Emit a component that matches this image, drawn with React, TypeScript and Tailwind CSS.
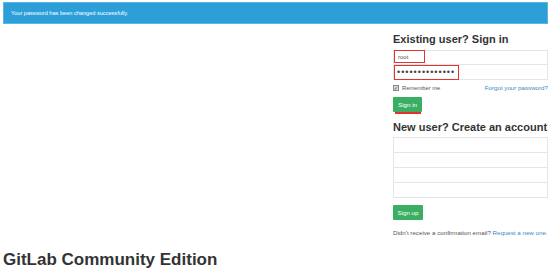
import React from "react";

const font = { fontFamily: '"Liberation Sans", Arial, sans-serif' };

function Field({ children }: { children?: React.ReactNode }) {
  return (
    <div className="-mt-px flex h-[16px] items-center border border-[#e5e5e5] bg-white px-[4px] first:mt-0">
      {children}
    </div>
  );
}

function Annotation({ className }: { className: string }) {
  // red markup boxes drawn over the form
  return <div className={`pointer-events-none absolute border-[1.5px] border-[#e0342c] ${className}`} />;
}

export default function App() {
  return (
    <div style={font} className="w-[553px] h-[268px] overflow-hidden bg-white text-[#555]">
      <div className="ml-[3px] mt-[2px] w-[545px]">
        <div className="flex h-[22px] items-center border border-[#58b6e4] bg-[#2c9fd9] pl-[7px] text-[5.6px] text-white">
          Your password has been changed successfully.
        </div>

        <div className="flex justify-end">
          <div className="relative w-[155px]">
            <h2 className="mt-[9px] text-[11px] font-bold leading-[13px] text-[#333]">Existing user? Sign in</h2>

            <div className="mt-[4px] flex flex-col">
              <div className="flex h-[15px] items-center border border-[#e5e5e5] px-[4px] text-[6px] text-[#555]">
                root
              </div>
              <div className="-mt-px flex h-[16px] items-center border border-[#e5e5e5] px-[3px]">
                <span className="text-[9px] leading-none tracking-[1px] text-[#444]">••••••••••••••</span>
              </div>
            </div>

            <div className="mt-[3px] flex h-[10px] items-center justify-between">
              <label className="flex items-center gap-[3px] text-[5.8px] text-[#555]">
                <span className="flex h-[6px] w-[6px] items-center justify-center border border-[#888] bg-[#ddd] text-[5px] leading-none text-[#333]">
                  ✓
                </span>
                Remember me
              </label>
              <span className="text-[6.2px] text-[#3a88c6]">Forgot your password?</span>
            </div>

            <button className="mt-[4px] flex h-[15px] w-[29px] items-center justify-center rounded-[1px] bg-[#3aae62] text-[6.2px] text-white">
              Sign in
            </button>

            <h2 className="mt-[9px] text-[11px] font-bold leading-[13px] text-[#333]">New user? Create an account</h2>

            <div className="mt-[3px] flex flex-col">
              <Field />
              <Field />
              <Field />
              <Field />
            </div>

            <button className="mt-[7px] flex h-[15px] w-[30px] items-center justify-center rounded-[1px] bg-[#3aae62] text-[6.2px] text-white">
              Sign up
            </button>

            <p className="mt-[9px] text-[6.2px] leading-[8px] text-[#555]">
              Didn't receive a confirmation email? <span className="text-[#3a88c6]">Request a new one.</span>
            </p>

            <Annotation className="left-[1px] top-[26px] h-[13px] w-[31px]" />
            <Annotation className="left-[1px] top-[41px] h-[15px] w-[65px]" />
            <div className="pointer-events-none absolute left-[2px] top-[88px] h-[2px] w-[26px] bg-[#e0342c]" />
          </div>
        </div>

        <h1 className="mt-[13px] text-[17px] font-bold leading-[20px] text-[#333]">GitLab Community Edition</h1>
      </div>
    </div>
  );
}
